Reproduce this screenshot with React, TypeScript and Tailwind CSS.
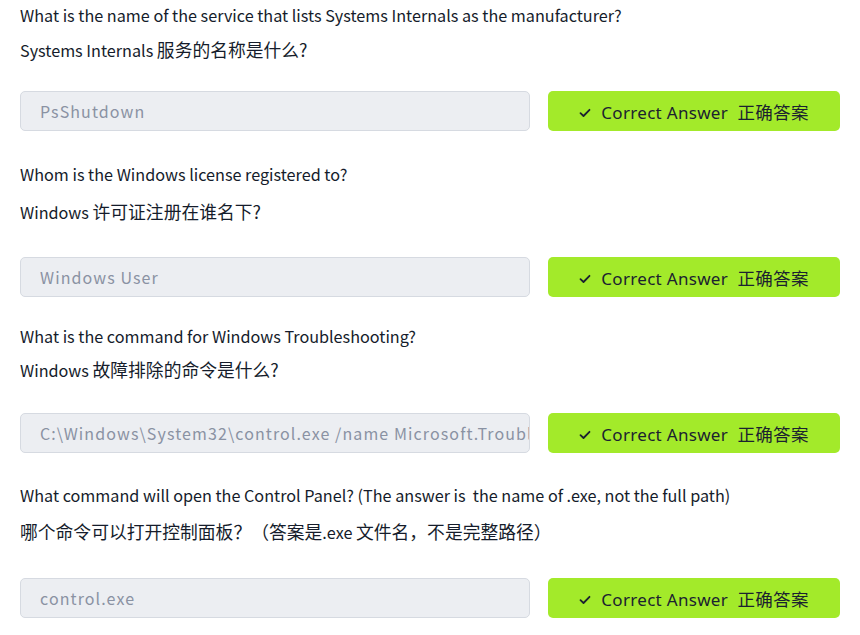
import { Fragment } from "react";

const font = { fontFamily: '"Noto Sans CJK SC", sans-serif' };

type Item = {
  en: string;
  zh: string;
  answer: string;
  top: string;
  zhGap: string;
  rowGap: string;
};

const items: Item[] = [
  {
    en: "What is the name of the service that lists Systems Internals as the manufacturer?",
    zh: "Systems Internals 服务的名称是什么?",
    answer: "PsShutdown",
    top: "mt-[3px]",
    zhGap: "mt-[11px]",
    rowGap: "mt-[29px]",
  },
  {
    en: "Whom is the Windows license registered to?",
    zh: "Windows 许可证注册在谁名下?",
    answer: "Windows User",
    top: "mt-[31px]",
    zhGap: "mt-[14px]",
    rowGap: "mt-[33px]",
  },
  {
    en: "What is the command for Windows Troubleshooting?",
    zh: "Windows 故障排除的命令是什么?",
    answer: "C:\\Windows\\System32\\control.exe /name Microsoft.Troubleshooting",
    top: "mt-[27px]",
    zhGap: "mt-[10px]",
    rowGap: "mt-[31px]",
  },
  {
    en: "What command will open the Control Panel? (The answer is\u00a0 the name of .exe, not the full path)",
    zh: "哪个命令可以打开控制面板？（答案是.exe 文件名，不是完整路径）",
    answer: "control.exe",
    top: "mt-[30px]",
    zhGap: "mt-[13px]",
    rowGap: "mt-[34px]",
  },
];

// CJK glyphs in the shot come out a bit larger than the latin text
function Mixed({ text }: { text: string }) {
  const parts = text.split(/([\u3000-\u9fff\uff00-\uffef]+\??)/);
  return (
    <>
      {parts.map((p, i) =>
        i % 2 === 1 ? (
          <span key={i} className="text-[17.8px] leading-none">
            {p}
          </span>
        ) : (
          <Fragment key={i}>{p}</Fragment>
        ),
      )}
    </>
  );
}

function CheckIcon() {
  return (
    <svg width="12" height="10" viewBox="0 0 12 10" fill="none" className="shrink-0">
      <path d="M1.5 5.2 L4.5 8 L10.5 1.8" stroke="#1b2230" strokeWidth="1.8" strokeLinecap="round" strokeLinejoin="round" />
    </svg>
  );
}

export default function App() {
  return (
    <div className="min-h-screen w-[860px] bg-white px-5 pb-5 text-[#151c2b]" style={font}>
      {items.map((q, i) => (
        <div key={i} className={q.top}>
          <p className="text-[16.2px] leading-6 whitespace-nowrap">{q.en}</p>
          <p className={`${q.zhGap} h-6 text-[16.2px] leading-6 whitespace-nowrap [text-spacing-trim:space-all]`}>
            <Mixed text={q.zh} />
          </p>
          <div className={`${q.rowGap} flex gap-[18px]`}>
            <input
              readOnly
              value={q.answer}
              className="h-10 w-[510px] rounded-[5px] border border-[#d6dae1] bg-[#eceef2] pl-[19px] text-[16px] tracking-[1.1px] text-[#8a92a3] outline-none"
              style={font}
            />
            <button className="flex h-10 w-[292px] items-center justify-center gap-[10px] rounded-[5px] bg-[#a3ea2a] pt-[3px] text-[17px] text-[#1b2230]">
              <CheckIcon />
              <span
                className="tracking-[0.3px]"
                style={{ fontFamily: '"Noto Sans", "Noto Sans CJK SC", sans-serif' }}
              >
                Correct Answer&nbsp;&nbsp;<span className="text-[17.5px]">正确答案</span>
              </span>
            </button>
          </div>
        </div>
      ))}
    </div>
  );
}
